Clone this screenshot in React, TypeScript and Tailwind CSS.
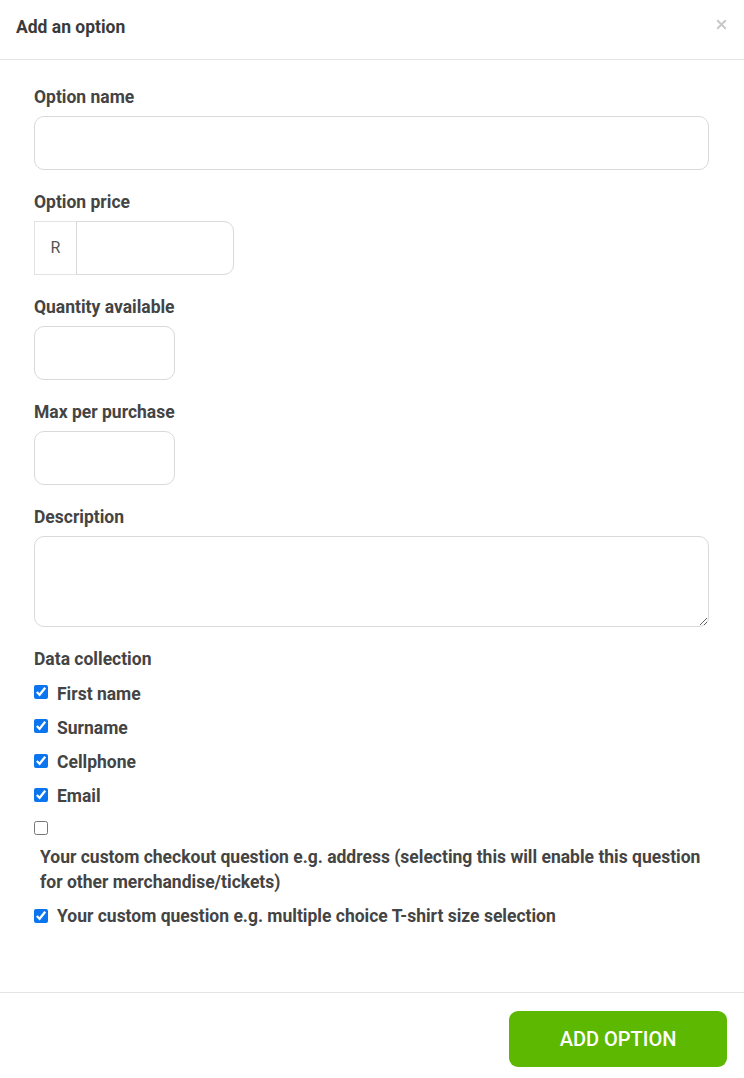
import { X } from 'lucide-react'

const checks = [
  { label: 'First name', on: true },
  { label: 'Surname', on: true },
  { label: 'Cellphone', on: true },
  { label: 'Email', on: true },
]

function Label({ children }: { children: React.ReactNode }) {
  return <div className="text-[17.5px] leading-6 font-bold text-[#444] mb-[7px]">{children}</div>
}

function Box({ on }: { on: boolean }) {
  return (
    <input
      type="checkbox"
      defaultChecked={on}
      className="w-[14px] h-[14px] m-0 accent-[#0b75f0] shrink-0"
    />
  )
}

export default function App() {
  return (
    <div className="w-[744px] h-[1078px] bg-white flex flex-col text-[#444]" style={{ fontFamily: 'Roboto, "Liberation Sans", sans-serif' }}>
      {/* cabecera */}
      <div className="h-[60px] border-b border-[#e5e5e5] flex items-center justify-between pl-4 pr-[15px] shrink-0">
        <div className="text-[17.5px] font-bold text-[#3a3a3a] -mt-[4px]">Add an option</div>
        <button className="text-[#c8c8c8] -mt-[10px]">
          <X size={15} strokeWidth={3} />
        </button>
      </div>

      {/* cuerpo */}
      <div className="flex-1 px-[34px] pt-[25px]">
        <Label>Option name</Label>
        <input className="block w-[675px] h-[54px] border border-[#d9d9d9] rounded-[10px] outline-none mb-5" />

        <Label>Option price</Label>
        <div className="flex w-[200px] h-[54px] mb-5">
          <div className="w-[42px] border border-[#e3e3e3] border-r-0 flex items-center justify-center text-[16px] text-[#555]">R</div>
          <input className="flex-1 min-w-0 border border-[#d9d9d9] rounded-r-[10px] outline-none" />
        </div>

        <Label>Quantity available</Label>
        <input className="block w-[141px] h-[54px] border border-[#d9d9d9] rounded-[10px] outline-none mb-5" />

        <Label>Max per purchase</Label>
        <input className="block w-[141px] h-[54px] border border-[#d9d9d9] rounded-[10px] outline-none mb-5" />

        <Label>Description</Label>
        <textarea className="block w-[675px] h-[91px] border border-[#d9d9d9] rounded-[10px] outline-none mb-[20px]" />

        <div className="text-[17.5px] leading-6 font-bold text-[#444] mb-[4px]">Data collection</div>
        <div className="flex flex-col">
          {checks.map((c) => (
            <label key={c.label} className="flex items-center gap-[9px] h-[34.3px] text-[17.5px] font-bold text-[#444]">
              <Box on={c.on} />
              <span className="-mb-[3px]">{c.label}</span>
            </label>
          ))}
          <div className="h-[31px] flex items-center">
            <Box on={false} />
          </div>
          <div className="pl-[6px] text-[17.5px] leading-[25px] font-bold text-[#444] mt-[2px] mb-[9px]">
            Your custom checkout question e.g. address (selecting this will enable this question for other merchandise/tickets)
          </div>
          <label className="flex items-center gap-[9px] h-[24px] text-[17.5px] font-bold text-[#444]">
            <Box on={true} />
            <span>Your custom question e.g. multiple choice T-shirt size selection</span>
          </label>
        </div>
      </div>

      {/* pie */}
      <div className="h-[86px] border-t border-[#e5e5e5] flex items-start justify-end pr-[17px] pt-[18px] shrink-0">
        <button className="w-[218px] h-[56px] rounded-[9px] bg-[#5cb800] text-white text-[20px] font-medium">
          ADD OPTION
        </button>
      </div>
    </div>
  )
}
